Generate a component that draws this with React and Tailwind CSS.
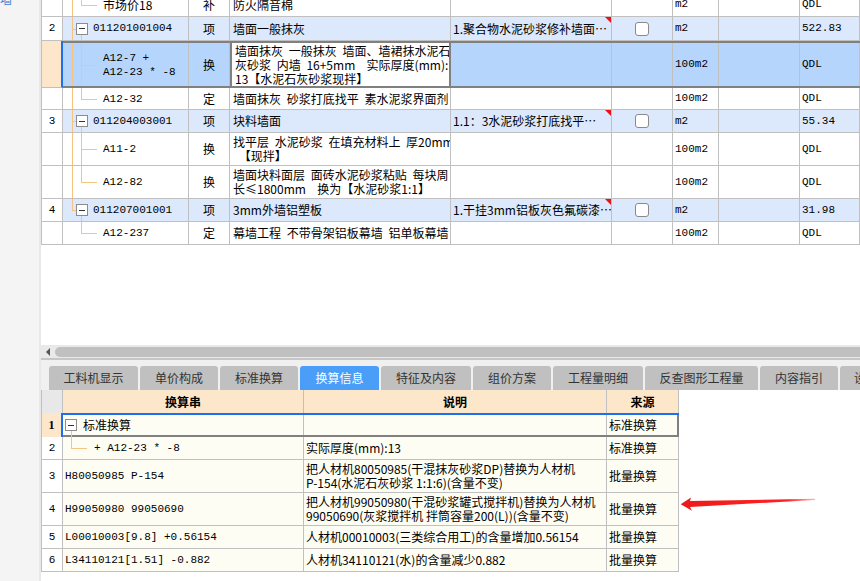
import React from "react";

const MONO = "font-['Liberation_Mono',monospace] text-[11px]";
const LINE = "absolute bg-[#f7c47f]";

const topRows = [
  { h: "h-[24px] -mt-[7px]", kind: "child", pc: true, last: true, code: "市场价18", cjk: true, type: "补", name: "防火隔音棉", unit: "m2", qdl: "QDL" },
  { h: "h-[24px]", num: "2", kind: "parent", last: false, code: "011201001004", type: "项", name: "墙面一般抹灰", feature: "1.聚合物水泥砂浆修补墙面…", unit: "m2", qdl: "522.83" },
  {
    h: "h-[47px]", kind: "child", selected: true, pc: true, last: false, code: ["A12-7 +", "A12-23 * -8"], type: "换",
    name: ["墙面抹灰 一般抹灰 墙面、墙裙抹水泥石", "灰砂浆 内墙 16+5mm  实际厚度(mm):", "13【水泥石灰砂浆现拌】"], unit: "100m2", qdl: "QDL",
  },
  { h: "h-[22px]", kind: "child", pc: true, last: true, code: "A12-32", type: "定", name: "墙面抹灰 砂浆打底找平 素水泥浆界面剂", unit: "100m2", qdl: "QDL" },
  { h: "h-[23px]", num: "3", kind: "parent", last: false, code: "011204003001", type: "项", name: "块料墙面", feature: "1.1：3水泥砂浆打底找平…", unit: "m2", qdl: "55.34" },
  { h: "h-[33px]", kind: "child", pc: true, last: false, code: "A11-2", type: "换", name: ["找平层 水泥砂浆 在填充材料上 厚20mm", " 【现拌】"], unit: "100m2", qdl: "QDL" },
  { h: "h-[33px]", kind: "child", pc: true, last: true, code: "A12-82", type: "换", name: ["墙面块料面层 面砖水泥砂浆粘贴 每块周", "长≤1800mm  换为【水泥砂浆1:1】"], unit: "100m2", qdl: "QDL" },
  { h: "h-[23px]", num: "4", kind: "parent", last: true, code: "011207001001", type: "项", name: "3mm外墙铝塑板", feature: "1.干挂3mm铝板灰色氟碳漆…", unit: "m2", qdl: "31.98" },
  { h: "h-[23px]", kind: "child", pc: false, last: true, code: "A12-237", type: "定", name: "幕墙工程 不带骨架铝板幕墙 铝单板幕墙", unit: "100m2", qdl: "QDL" },
];

const tabs = [
  { label: "工料机显示", w: "w-[89px]" },
  { label: "单价构成", w: "w-[78px]" },
  { label: "标准换算", w: "w-[78px]" },
  { label: "换算信息", w: "w-[79px]", active: true },
  { label: "特征及内容", w: "w-[90px]" },
  { label: "组价方案", w: "w-[78px]" },
  { label: "工程量明细", w: "w-[90px]" },
  { label: "反查图形工程量", w: "w-[113px]" },
  { label: "内容指引", w: "w-[78px]" },
];

const bottomRows = [
  { num: "2", h: "h-[23px]", code: "A12-23 * -8", child: true, desc: ["实际厚度(mm):13"], src: "标准换算" },
  { num: "3", h: "h-[33px]", code: "H80050985 P-154", desc: ["把人材机80050985(干混抹灰砂浆DP)替换为人材机", "P-154(水泥石灰砂浆 1:1:6)(含量不变)"], src: "批量换算" },
  { num: "4", h: "h-[33px]", code: "H99050980 99050690", desc: ["把人材机99050980(干混砂浆罐式搅拌机)替换为人材机", "99050690(灰浆搅拌机 拌筒容量200(L))(含量不变)"], src: "批量换算" },
  { num: "5", h: "h-[23px]", code: "L00010003[9.8] +0.56154", desc: ["人材机00010003(三类综合用工)的含量增加0.56154"], src: "批量换算" },
  { num: "6", h: "h-[23px]", code: "L34110121[1.51] -0.882", desc: ["人材机34110121(水)的含量减少0.882"], src: "批量换算" },
];

function Minus({ className }) {
  return (
    <span className={"absolute flex h-[12px] w-[12px] items-center justify-center border border-[#8c8c8c] bg-white " + className}>
      <span className="h-px w-[6px] bg-[#333]" />
    </span>
  );
}

function Lines({ lines, className }) {
  const list = Array.isArray(lines) ? lines : [lines];
  return (
    <div className={className}>
      {list.map((l, i) => (
        <div key={i} className="whitespace-pre">{l}</div>
      ))}
    </div>
  );
}

function TreeCode({ row }) {
  if (row.kind === "parent") {
    return (
      <div className={"relative flex items-center overflow-hidden border-[#c0c0c0] pl-[30px] " + (row.selected ? "" : "border-r border-b")}>
        <span className={LINE + " left-[9px] top-0 w-px " + (row.last ? "h-1/2" : "bottom-0")} />
        <span className={LINE + " left-[9px] top-1/2 h-px w-[4px]"} />
        <Minus className="left-[13px] top-1/2 -translate-y-1/2" />
        <span className={LINE + " left-[18px] top-[calc(50%+6px)] bottom-0 w-px"} />
        <span className={MONO}>{row.code}</span>
      </div>
    );
  }
  return (
    <div className={"relative flex items-center overflow-hidden border-r border-[#c0c0c0] pl-[40px] " + (row.selected ? "" : "border-b")}>
      {row.pc && <span className={LINE + " left-[9px] top-0 bottom-0 w-px"} />}
      <span className={LINE + " left-[18px] top-0 w-px " + (row.last ? "h-1/2" : "bottom-0")} />
      <span className={LINE + " left-[18px] top-1/2 h-px w-[16px]"} />
      <Lines lines={row.code} className={row.cjk ? "leading-[14px]" : MONO + " leading-[14px]"} />
    </div>
  );
}

function TopRow({ row }) {
  const parent = row.kind === "parent";
  const bg = parent ? "bg-[#dce8fc]" : row.selected ? "bg-[#b5d5fd]" : "bg-white";
  const cell = "flex items-center overflow-hidden border-[#c0c0c0] " + (row.selected ? "border-r" : "border-r border-b");
  return (
    <div className={"flex shrink-0 " + row.h}>
      <div
        className={
          "flex w-[22px] shrink-0 items-center justify-center border-l border-b border-[#c0c0c0] " +
          (row.selected ? "border-r-2 border-r-[#1b6ff0] bg-[#fde6c9]" : "border-r bg-white")
        }
      >
        <span className={MONO}>{row.num}</span>
      </div>
      <div
        className={
          "grid w-[797px] shrink-0 grid-cols-[126px_41px_221px_161px_61px_46px_81px_60px] " +
          bg + (row.selected ? " border-y-2 border-[#808080]" : "")
        }
      >
        <TreeCode row={row} />
        <div className={cell + " justify-center"}>{row.type}</div>
        <div
          className={
            row.selected
              ? "flex items-center overflow-hidden border-x-2 border-[#808080] bg-white pl-[3px] [word-spacing:3px]"
              : cell + " pl-[3px] [word-spacing:3px]"
          }
        >
          <Lines lines={row.name} className="leading-[14px]" />
        </div>
        <div className={cell + " relative pl-[2px]"}>
          {row.feature && <span className="whitespace-nowrap">{row.feature}</span>}
          {row.feature && (
            <span className="absolute right-0 top-0 h-0 w-0 border-l-[6px] border-t-[6px] border-l-transparent border-t-[#ee1111]" />
          )}
        </div>
        <div className={cell + " justify-center"}>
          {parent && <span className="h-[14px] w-[14px] rounded-[3px] border border-[#8a8a8a] bg-white" />}
        </div>
        <div className={cell + " pl-[2px]"}>
          <span className={MONO}>{row.unit}</span>
        </div>
        <div className={cell} />
        <div className={cell + " pl-[2px]"}>
          <span className={MONO}>{row.qdl}</span>
        </div>
      </div>
    </div>
  );
}

function BottomRow({ row }) {
  const cell = "flex items-center overflow-hidden border-r border-b border-[#c0c0c0] bg-[#fdfdf4]";
  return (
    <div className={"flex shrink-0 " + row.h}>
      <div className="flex w-[22px] shrink-0 items-center justify-center border-x border-b border-[#c0c0c0] bg-white">
        <span className={MONO}>{row.num}</span>
      </div>
      <div className="grid w-[616px] shrink-0 grid-cols-[241px_303px_72px]">
        <div className={cell + " relative " + (row.child ? "pl-[31px]" : "pl-[2px]")}>
          {row.child && (
            <>
              <span className={LINE + " left-[8px] top-0 h-1/2 w-px"} />
              <span className={LINE + " left-[8px] top-1/2 h-px w-[16px]"} />
            </>
          )}
          <span className={MONO + " whitespace-pre"}>{row.child ? "+ " + row.code : row.code}</span>
        </div>
        <div className={cell + " pl-[2px]"}>
          <Lines lines={row.desc} className="leading-[14px]" />
        </div>
        <div className={cell + " pl-[2px]"}>{row.src}</div>
      </div>
    </div>
  );
}

export default function App() {
  return (
    <div className="relative flex h-[581px] w-[860px] overflow-hidden bg-white font-['Noto_Sans_CJK_SC',sans-serif] text-[12px] text-black">
      {/* left strip */}
      <div className="flex w-[41px] shrink-0 flex-col overflow-hidden border-r-2 border-[#e8e8e8] bg-[#f4f4f4]">
        <span className="-mt-[8px] whitespace-nowrap text-[12px] leading-[14px] text-[#3f7fd6]">墙…</span>
      </div>

      <div className="flex w-[819px] shrink-0 flex-col">
        {/* top table */}
        <div className="flex h-[345px] shrink-0 flex-col overflow-hidden">
          {topRows.map((row, i) => (
            <TopRow key={i} row={row} />
          ))}
        </div>

        {/* scrollbar */}
        <div className="flex h-[13px] shrink-0 items-center bg-[#e9e9e9]">
          <span className="ml-[5px] h-0 w-0 border-y-[4px] border-r-[4px] border-y-transparent border-r-[#555]" />
          <div className="ml-[5px] h-[10px] flex-1 rounded-l-full bg-[#c0c0c0]" />
        </div>
        <div className="h-[2px] shrink-0 bg-[#c6c6c6]" />

        {/* tabs */}
        <div className="flex h-[30px] shrink-0 items-end gap-[2px] bg-[#f0f0f0] pl-[8px]">
          {tabs.map((t) => (
            <div
              key={t.label}
              className={
                "flex h-[24px] shrink-0 items-center justify-center whitespace-nowrap rounded-t-[3px] " +
                t.w + (t.active ? " bg-[#4a9ef8] text-white" : " bg-[#c0c0c0] text-[#333]")
              }
            >
              {t.label}
            </div>
          ))}
          <div className="flex h-[24px] w-[60px] shrink-0 items-center rounded-t-[3px] bg-[#c0c0c0] pl-[14px] text-[#333]">设置</div>
        </div>

        {/* bottom table */}
        <div className="flex shrink-0 flex-col">
          <div className="flex h-[23px] shrink-0">
            <div className="w-[22px] shrink-0 border-x border-[#c0c0c0] bg-[#e8e8e8]" />
            <div className="grid w-[616px] shrink-0 grid-cols-[241px_303px_72px] bg-[#fde7cb] font-bold">
              <div className="flex items-center justify-center border-r border-[#c0c0c0]">换算串</div>
              <div className="flex items-center justify-center border-r border-[#c0c0c0]">说明</div>
              <div className="flex items-center justify-center border-r border-[#c0c0c0]">来源</div>
            </div>
          </div>
          <div className="flex h-[24px] shrink-0">
            <div className="flex w-[22px] shrink-0 items-center justify-center border-l border-r-2 border-[#c0c0c0] border-r-[#1b6ff0] bg-[#fde6c9] font-bold">
              <span className="font-['Liberation_Serif',serif]">1</span>
            </div>
            <div className="grid w-[616px] shrink-0 grid-cols-[241px_303px_72px] border-t-2 border-b-2 border-t-[#1b6ff0] border-b-[#808080] bg-[#fdfdf4]">
              <div className="relative flex items-center border-r border-[#c0c0c0] pl-[20px]">
                <Minus className="left-[2px] top-1/2 -translate-y-1/2" />
                <span className={LINE + " left-[8px] top-[calc(50%+6px)] -bottom-[2px] w-px"} />
                标准换算
              </div>
              <div className="border-r border-[#c0c0c0]" />
              <div className="flex items-center border-r-2 border-[#808080] pl-[2px]">标准换算</div>
            </div>
          </div>
          {bottomRows.map((row) => (
            <BottomRow key={row.num} row={row} />
          ))}
        </div>
      </div>

      {/* red annotation arrow */}
      <svg className="absolute left-[670px] top-[490px]" width="150" height="25" viewBox="0 0 150 25">
        <defs>
          <linearGradient id="fade" x1="0" y1="0" x2="1" y2="0">
            <stop offset="0" stopColor="#ee1a1a" />
            <stop offset="0.8" stopColor="#f22" />
            <stop offset="1" stopColor="#f66" stopOpacity="0.5" />
          </linearGradient>
        </defs>
        <polygon points="10.7,14.3 21,7.5 20,11 145,8.7 145,10 20,17 22,20.7" fill="url(#fade)" />
      </svg>
    </div>
  );
}
